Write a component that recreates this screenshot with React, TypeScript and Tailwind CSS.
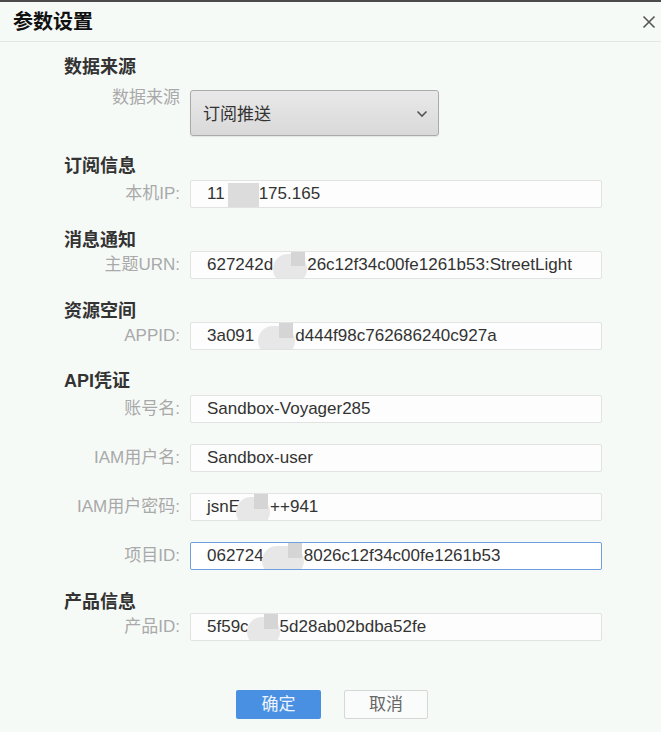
import React from "react";

const Blob = ({ w, variant = "round" }: { w: number; variant?: "round" | "rect" }) => {
  if (variant === "rect") {
    return (
      <span className="relative inline-block h-[18px] align-middle" style={{ width: w }}>
        <span className="absolute left-0 right-0 top-[-3px] h-[24px] bg-[#dcdcdc]" />
      </span>
    );
  }
  return (
    <span className="relative inline-block h-[18px] align-middle" style={{ width: w }}>
      <span className="absolute left-0 right-0 top-[-2px] h-[30px] rounded-full bg-[#e6e7e6]" />
      <span className="absolute right-[2px] top-[-6px] h-[16px] w-[14px] bg-[#d5d5d5]" />
    </span>
  );
};

const Heading = ({ children, mt }: { children: React.ReactNode; mt: string }) => (
  <div className={`${mt} h-[22px] pl-[64px] text-[18px] font-bold leading-[22px] text-[#333]`}>{children}</div>
);

const Row = ({
  label,
  children,
  mt,
  focused = false,
}: {
  label: string;
  children: React.ReactNode;
  mt: string;
  focused?: boolean;
}) => (
  <div className={`${mt} flex items-center`}>
    <div className="w-[180px] shrink-0 text-right text-[17px] text-[#a9a9a9]">{label}</div>
    <div
      className={`ml-[10px] flex h-[28px] w-[412px] items-center overflow-hidden whitespace-nowrap rounded-[2px] border pl-[16px] text-[17px] text-[#333] ${
        focused ? "border-[#6f9fdc] bg-white" : "border-[#e1e3e2] bg-[#fcfdfc]"
      }`}
    >
      {children}
    </div>
  </div>
);

export default function App() {
  return (
    <div className="relative h-[732px] w-[661px] overflow-hidden bg-[#f6faf7] font-['Liberation_Sans','Noto_Sans_CJK_SC',sans-serif]">
      <div className="h-[2px] bg-[#4b4b4b]" />
      <div className="flex h-[40px] items-center justify-between border-b border-[#e4e8e5] pl-[13px] pr-[6px]">
        <div className="text-[20px] font-bold text-[#111]">参数设置</div>
        <svg width="16" height="16" viewBox="0 0 16 16" className="mr-[-2px]">
          <path d="M2.5 2.5 L13.5 13.5 M13.5 2.5 L2.5 13.5" stroke="#555" strokeWidth="1.6" />
        </svg>
      </div>

      <Heading mt="mt-[14px]">数据来源</Heading>
      <div className="mt-[12px] flex items-start">
        <div className="mt-[-5px] w-[180px] shrink-0 text-right text-[17px] text-[#a9a9a9]">数据来源</div>
        <div className="ml-[10px] flex h-[46px] w-[249px] items-center justify-between rounded-[3px] border border-[#a9aaa9] bg-gradient-to-b from-[#e9e9e9] to-[#d9d9d9] pl-[12px] pr-[10px] text-[17px] text-[#333] shadow-[0_1px_1px_rgba(0,0,0,0.08)]">
          <span className="mt-[4px]">订阅推送</span>
          <svg width="12" height="8" viewBox="0 0 12 8" className="mt-[1px]">
            <path d="M1.5 1.5 L6 6 L10.5 1.5" fill="none" stroke="#555" strokeWidth="1.6" />
          </svg>
        </div>
      </div>

      <Heading mt="mt-[19px]">订阅信息</Heading>
      <Row label="本机IP:" mt="mt-[3px]">
        <span>11</span>
        <span className="ml-[3px]"><Blob w={31} variant="rect" /></span>
        <span>175.165</span>
      </Row>

      <Heading mt="mt-[21px]">消息通知</Heading>
      <Row label="主题URN:" mt="mt-[0px]">
        <span>627242d</span>
        <Blob w={34} />
        <span>26c12f34c00fe1261b53:StreetLight</span>
      </Row>

      <Heading mt="mt-[21px]">资源空间</Heading>
      <Row label="APPID:" mt="mt-[0px]">
        <span>3a091</span>
        <span className="ml-[4px]"><Blob w={37} /></span>
        <span>d444f98c762686240c927a</span>
      </Row>

      <Heading mt="mt-[20px]">API凭证</Heading>
      <Row label="账号名:" mt="mt-[3px]">
        <span>Sandbox-Voyager285</span>
      </Row>
      <Row label="IAM用户名:" mt="mt-[21px]">
        <span>Sandbox-user</span>
      </Row>
      <Row label="IAM用户密码:" mt="mt-[21px]">
        <span>jsnE</span>
        <span className="ml-[-4px]"><Blob w={34} /></span>
        <span>++941</span>
      </Row>
      <Row label="项目ID:" mt="mt-[21px]" focused>
        <span>062724</span>
        <span className="ml-[-2px]"><Blob w={42} /></span>
        <span>8026c12f34c00fe1261b53</span>
      </Row>

      <Heading mt="mt-[21px]">产品信息</Heading>
      <Row label="产品ID:" mt="mt-[0px]">
        <span>5f59c</span>
        <span className="ml-[-2px]"><Blob w={33} /></span>
        <span>5d28ab02bdba52fe</span>
      </Row>

      <div className="mt-[49px] flex justify-center gap-[23px] pl-[3px]">
        <button className="h-[29px] w-[85px] rounded-[2px] bg-[#4a90e2] text-[17px] text-[#eef4fd]">确定</button>
        <button className="h-[29px] w-[84px] rounded-[2px] border border-[#d6d8d7] bg-[#fafcfb] text-[17px] text-[#666]">取消</button>
      </div>
    </div>
  );
}
